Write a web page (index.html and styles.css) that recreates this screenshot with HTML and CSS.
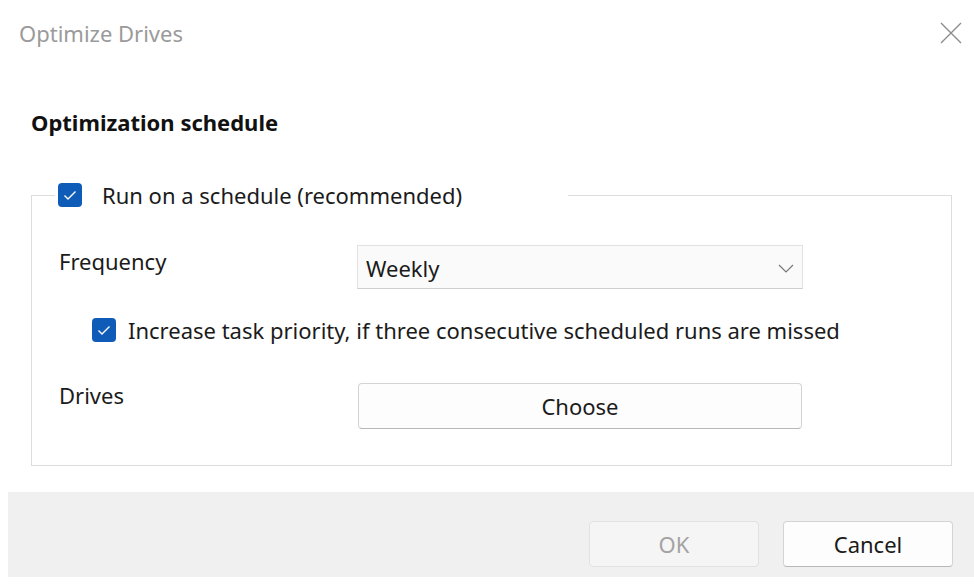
FILE: index.html
```html
<!DOCTYPE html>
<html lang="en">
<head>
<meta charset="utf-8">
<title>Optimize Drives</title>
<link rel="stylesheet" href="styles.css">
</head>
<body>
<div class="dialog">
  <div class="titlebar">
    <span class="title">Optimize Drives</span>
    <span class="close" aria-label="Close">
      <svg width="22" height="22" viewBox="0 0 22 22"><path d="M1 1 L21 21 M21 1 L1 21" stroke="#8c8c8c" stroke-width="1.4" fill="none"/></svg>
    </span>
  </div>
  <div class="content">
    <h2 class="heading">Optimization schedule</h2>
    <fieldset class="group">
      <legend class="group-legend">
        <span class="check"><svg width="24" height="24" viewBox="0 0 24 24"><path d="M6.5 12.5 L10 16 L17.5 8.5" stroke="#fff" stroke-width="1.4" fill="none"/></svg></span>
        <span class="check-label">Run on a schedule (recommended)</span>
      </legend>
      <div class="row row-freq">
        <span class="row-label">Frequency</span>
        <div class="select">
          <span>Weekly</span>
          <svg class="chev" width="16" height="9" viewBox="0 0 16 9"><path d="M1 1 L8 8 L15 1" stroke="#777" stroke-width="1.2" fill="none"/></svg>
        </div>
      </div>
      <div class="row row-priority">
        <span class="check"><svg width="24" height="24" viewBox="0 0 24 24"><path d="M6.5 12.5 L10 16 L17.5 8.5" stroke="#fff" stroke-width="1.4" fill="none"/></svg></span>
        <span class="check-label">Increase task priority, if three consecutive scheduled runs are missed</span>
      </div>
      <div class="row row-drives">
        <span class="row-label">Drives</span>
        <button class="btn btn-choose">Choose</button>
      </div>
    </fieldset>
  </div>
  <div class="footer">
    <button class="btn btn-foot btn-disabled">OK</button>
    <button class="btn btn-foot">Cancel</button>
  </div>
</div>
</body>
</html>
```

FILE: styles.css
```css
* { box-sizing: border-box; }
html, body { margin: 0; padding: 0; background: #fff; }
body {
  width: 974px;
  height: 586px;
  overflow: hidden;
  font-family: "Noto Sans", "Open Sans", sans-serif;
  font-size: 22px;
  color: #1b1b1b;
}
.dialog { width: 974px; height: 586px; display: flex; flex-direction: column; }
.titlebar {
  height: 68px;
  display: flex;
  align-items: center;
  justify-content: space-between;
  padding: 0 12px 0 19px;
}
.title { font-size: 22px; line-height: 30px; color: #9a9a9a; margin-top: -3px; }
.close { display: flex; width: 22px; height: 22px; margin-top: -3px; }
.content { padding: 0 22px 0 31px; }
.heading {
  margin: 39px 0 0 0;
  font-size: 22px;
  font-weight: 700;
  line-height: 30px;
  color: #111;
}
.group {
  margin: 43px 0 0 0;
  padding: 0 0 36px 0;
  width: 921px;
  min-width: 0;
  border: 1px solid #dcdcdc;
}
.group-legend {
  margin-left: 23px;
  padding: 0 0 0 3px;
  width: 513px;
  height: 30px;
  display: flex;
  align-items: center;
  gap: 20px;
}
.check {
  width: 24px;
  height: 24px;
  flex: none;
  border-radius: 4px;
  background: #0f5cb8;
  display: flex;
}
.check-label { line-height: 30px; white-space: nowrap; }
.row { display: flex; }
.row-label { width: 325px; padding-left: 27px; flex: none; line-height: 30px; }
.row-freq { margin-top: 35px; align-items: flex-start; }
.row-freq .row-label { margin-top: 1px; }
.select {
  width: 446px;
  height: 44px;
  background: #fafafa;
  border: 1px solid #e1e1e1;
  border-bottom-color: #cfcfcf;
  display: flex;
  align-items: center;
  justify-content: space-between;
  padding: 2px 8px 0 8px;
}
.row-priority {
  margin-top: 29px;
  padding-left: 60px;
  align-items: center;
  gap: 12px;
  height: 24px;
}
.row-drives { margin-top: 41px; align-items: flex-start; }
.row-drives .row-label { margin-top: -3px; }
.btn {
  font-family: inherit;
  font-size: 22px;
  color: #1b1b1b;
  background: #fdfdfd;
  border: 1px solid #d4d4d4;
  border-bottom-color: #b8b8b8;
  border-radius: 4px;
  padding: 0;
  line-height: 30px;
}
.btn-choose { width: 444px; height: 46px; margin-left: 1px; }
.footer {
  margin: 26px 0 0 8px;
  height: 85px;
  background: #f0f0f0;
  display: flex;
  justify-content: flex-end;
  align-items: flex-start;
  gap: 24px;
  padding: 29px 21px 0 0;
}
.btn-foot { width: 170px; height: 46px; }
.btn-disabled {
  color: #a3a3a3;
  background: #f5f5f5;
  border-color: #e2e2e2;
}
```
